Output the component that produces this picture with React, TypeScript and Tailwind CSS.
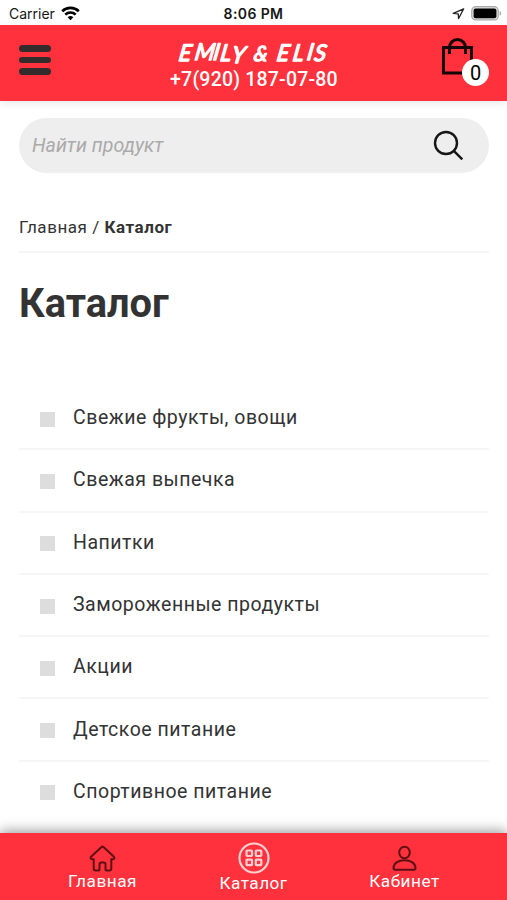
const categories = [
  "Свежие фрукты, овощи",
  "Свежая выпечка",
  "Напитки",
  "Замороженные продукты",
  "Акции",
  "Детское питание",
  "Спортивное питание",
];

function StatusBar() {
  return (
    <div className="grid h-[25px] grid-cols-3 items-center pt-[3px] font-[Inter,sans-serif] text-[#161616]">
      <div className="flex items-center gap-[6px] pl-[9px]">
        <span className="text-[14px] leading-none">Carrier</span>
        <svg width="19" height="15" viewBox="0 0 19 15" fill="none" stroke="#000" strokeWidth="2.7" className="-mt-[2px]">
          <path d="M1.2 5.3a12 12 0 0 1 16.6 0" />
          <path d="M4.3 8.6a7.5 7.5 0 0 1 10.4 0" />
          <path d="M9.5 14.2 6.7 11.3a4 4 0 0 1 5.6 0Z" fill="#000" stroke="none" />
        </svg>
      </div>
      <div className="text-center text-[14px] leading-none font-semibold tracking-[0.4px]">8:06 PM</div>
      <div className="-mt-[2px] flex items-center justify-end gap-[6px] pr-[5px]">
        <svg width="13" height="13" viewBox="0 0 13 13" fill="none" stroke="#222" strokeWidth="1.3" strokeLinejoin="round">
          <path d="M11.7 1.8 1.2 6.3l5 .5.4 4.7Z" />
        </svg>
        <svg width="31" height="15" viewBox="0 0 31 15">
          <rect x="0.7" y="0.7" width="26.6" height="13.2" rx="4" fill="#ddd" stroke="#aaa" strokeWidth="1.2" />
          <rect x="2.6" y="2.6" width="22.8" height="9.6" rx="2" fill="#000" />
          <path d="M28.7 5v4.8c2-.6 2-4.2 0-4.8Z" fill="#aaa" />
        </svg>
      </div>
    </div>
  );
}

function Logo() {
  return (
    <svg
      width="156"
      height="29"
      viewBox="0 0 156 29"
      fill="#fff"
      stroke="#fff"
      strokeWidth="1.3"
      strokeLinejoin="round"
      className="font-[Lato,sans-serif] text-[23px] font-normal italic"
    >
      <text transform="translate(2 22.5) skewX(-9)">
        <tspan x="0 16 34.5 41.5 53" y="0 -0.5 -0.5 0.5 2">EMILY</tspan>
        <tspan x="75" y="0" className="text-[21px]">&amp;</tspan>
        <tspan x="98 114 128 135.5" y="0.5 0 -1 0">ELIS</tspan>
      </text>
    </svg>
  );
}

function Header() {
  return (
    <header className="flex h-[76px] items-start justify-between bg-[#ff313c] pr-[18px] pl-[19px] shadow-[0_2px_8px_rgba(0,0,0,0.1)]">
      <button className="mt-[20px] flex w-[50px] flex-col gap-[5px]">
        <span className="h-[6.5px] w-[32px] rounded-full bg-[#332b2c]" />
        <span className="h-[6.5px] w-[32px] rounded-full bg-[#332b2c]" />
        <span className="h-[6.5px] w-[32px] rounded-full bg-[#332b2c]" />
      </button>
      <div className="flex flex-col items-center pt-[13px] text-white">
        <Logo />
        <span className="text-[19.5px] leading-[26px] font-medium tracking-[0.2px]">+7(920) 187-07-80</span>
      </div>
      <button className="relative mt-[12px] h-[50px] w-[50px]">
        <svg width="35" height="38" viewBox="0 0 35 38" fill="none" stroke="#160506" strokeWidth="3" className="absolute top-0 left-0">
          <path d="M4.5 10.5h28v25.500h-28Z" />
          <path d="M10.5 17v-6.500a8 8 0 0 1 16 0V17" />
        </svg>
        <span className="absolute top-[22px] left-[23px] flex h-[27px] w-[27px] items-center justify-center rounded-full bg-white text-[20px] text-black">
          0
        </span>
      </button>
    </header>
  );
}

function SearchField() {
  return (
    <div className="mt-[17px] flex h-[55px] items-center justify-between rounded-full bg-[#eee] pr-[25px] pl-[13px]">
      <span className="pt-px text-[19.6px] text-[#aaa] italic">Найти продукт</span>
      <svg width="31" height="31" viewBox="0 0 31 31" fill="none" stroke="#161616" strokeWidth="2.4">
        <circle cx="13" cy="13" r="11" />
        <path d="m20.8 20.8 8.5 8.5" />
      </svg>
    </div>
  );
}

function BottomNav() {
  return (
    <nav className="absolute inset-x-0 bottom-0 flex h-[67px] justify-center bg-[#ff313c] text-[17.2px] leading-[20px] tracking-[0.5px] text-white shadow-[0_-2px_12px_rgba(0,0,0,0.4)]">
      <a className="flex w-[151px] flex-col items-center pt-[12px]">
        <svg width="27" height="27" viewBox="0 0 27 27" fill="none" stroke="#5c1014" strokeWidth="2" strokeLinejoin="round">
          <path d="M12.3 2.2 2.3 11.5c-1.2 1.2-.6 2.8 1.2 2.8h1.2v9.2q0 2 2 2h2.6q1.2 0 1.2-1.2v-5.1q0-1.7 1.7-1.7h2.6q1.7 0 1.7 1.7v5.1q0 1.2 1.2 1.2h2.6q2 0 2-2v-9.2h1.2c1.8 0 2.4-1.6 1.2-2.8L14.7 2.2q-1.2-1.1-2.4 0Z" />
        </svg>
        <span className="-mt-px">Главная</span>
      </a>
      <a className="flex w-[151px] flex-col items-center pt-[9px]">
        <svg width="32" height="32" viewBox="0 0 32 32" fill="none" stroke="#ffd0d2" strokeWidth="2.2">
          <circle cx="16" cy="16" r="14.5" />
          <rect x="8.5" y="8.5" width="5.5" height="5.5" rx="0.7" />
          <rect x="17.8" y="8.5" width="5.5" height="5.5" rx="0.7" />
          <rect x="8.5" y="17.6" width="5.5" height="5.5" rx="0.7" />
          <rect x="17.8" y="17.6" width="5.5" height="5.5" rx="0.7" />
        </svg>
        <span className="-mt-px">Каталог</span>
      </a>
      <a className="flex w-[151px] flex-col items-center pt-[12px]">
        <svg width="27" height="27" viewBox="0 0 27 27" fill="none" stroke="#5c1014" strokeWidth="2">
          <ellipse cx="13.5" cy="7.5" rx="5.3" ry="5.8" />
          <path d="M2.5 23c0-10.5 22-10.5 22 0q0 1.8-1.8 1.8H4.3Q2.5 24.8 2.5 23Z" />
        </svg>
        <span className="-mt-px">Кабинет</span>
      </a>
    </nav>
  );
}

export default function App() {
  return (
    <div className="relative h-[900px] w-[507px] overflow-hidden bg-white font-[Roboto,sans-serif] text-[#333]">
      <StatusBar />
      <Header />
      <main className="pr-[18px] pl-[19px]">
        <SearchField />
        <div className="mt-[39px] h-[41px] border-b-2 border-[#f5f5f5] pt-[3px] text-[17px] leading-[24px] tracking-[0.54px]">
          Главная / <span className="font-bold">Каталог</span>
        </div>
        <h1 className="mt-[26px] text-[39.8px] leading-[50px] font-bold">Каталог</h1>
        <ul className="mt-[59px]">
          {categories.map((name) => (
            <li key={name} className="flex h-[62.3px] items-center border-b-2 border-[#f6f6f6] pl-[21px] last:border-transparent">
              <span className="mt-[2px] mr-[18px] h-[15px] w-[15px] bg-[#ddd]" />
              <span className="text-[19.5px] leading-[24px] tracking-[0.52px]">{name}</span>
            </li>
          ))}
        </ul>
      </main>
      <BottomNav />
    </div>
  );
}
